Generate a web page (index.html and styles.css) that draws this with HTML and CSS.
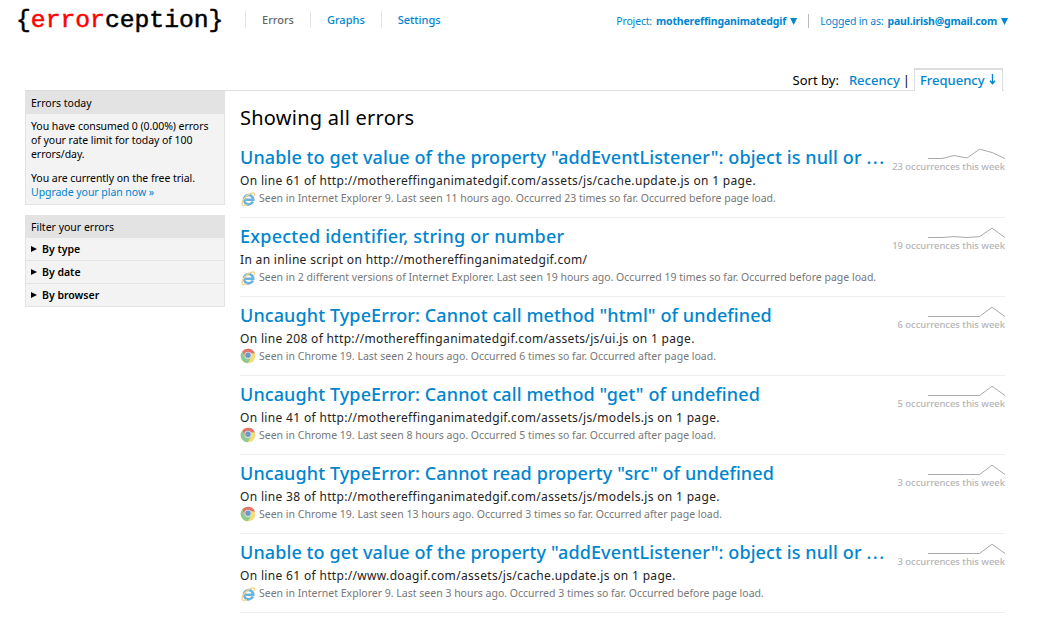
FILE: index.html
```html
<!DOCTYPE html>
<html lang="en">
<head>
<meta charset="utf-8">
<title>Errorception</title>
<link rel="stylesheet" href="styles.css">
</head>
<body>
<svg class="defs" width="0" height="0" aria-hidden="true">
  <symbol id="ie" viewBox="0 0 16 16">
    <path d="M12.9 10.6A4.7 4.7 0 1 1 13.300 8.700H5.400" fill="none" stroke="#6bb2de" stroke-width="2.600"/>
    <path d="M2.6 14.2C.4 11.800 5.500 4.200 10.800 2.300c3.200-1 4.200.3 3.500 2.700" fill="none" stroke="#f3d489" stroke-width="1.400"/>
    <path d="M2.600 14.200c1 .8 2.600.3 4-.6" fill="none" stroke="#f3d489" stroke-width="1.200"/>
  </symbol>
  <symbol id="chrome" viewBox="0 0 16 16">
    <circle cx="8" cy="8" r="7.3" fill="#f5dc77"/>
    <path d="M2.300 3.500A7.300 7.300 0 0 1 14.900 5.600L8 5 5 9.800Z" fill="#e2726b"/>
    <path d="M2.300 3.500A7.300 7.300 0 0 0 7.800 15.300L10.800 10 5 9.800Z" fill="#8fcb8f"/>
    <circle cx="8" cy="7.300" r="3.600" fill="#dfe6ee"/>
    <circle cx="8" cy="7.300" r="2.700" fill="#6f98c6"/>
  </symbol>
</svg>
<header class="top">
  <a class="logo"><span class="red">error</span></a>
  <nav class="nav"><a class="current">Errors</a><a>Graphs</a><a>Settings</a></nav>
  <div class="account"><a class="project">Project: <b>mothereffinganimatedgif</b> <i class="down"></i></a><a class="user">Logged in as: <b>paul.irish@gmail.com</b> <i class="down"></i></a></div>
</header>
<div class="sort"><span class="label">Sort by:</span><a class="recency">Recency</a><span class="bar">|</span><a class="tab">Frequency <svg width="7" height="11" viewBox="0 0 7 11"><path d="M3.5 0v9.5M1 6.8l2.5 2.8L6 6.8" fill="none" stroke="#0085cf" stroke-width="1.4"/></svg></a></div>
<div class="page">
  <aside class="side">
    <section class="box">
      <h3>Errors today</h3>
      <div class="quota"><p>You have consumed 0 (0.00%) errors<br>of your rate limit for today of 100<br>errors/day.</p><p>You are currently on the free trial.<br><a>Upgrade your plan now »</a></p></div>
    </section>
    <section class="box filters">
      <h3>Filter your errors</h3>
      <div class="filter"><i class="right"></i>By type</div>
      <div class="filter"><i class="right"></i>By date</div>
      <div class="filter"><i class="right"></i>By browser</div>
    </section>
  </aside>
  <main class="main">
    <h1>Showing all errors</h1>
    <article class="error">
      <div class="info"><h2>Unable to get value of the property "addEventListener": object is null or <span class="dots">...</span></h2>
      <p class="where">On line 61 of http://mothereffinganimatedgif.com/assets/js/cache.update.js on 1 page.</p>
      <p class="seen"><svg class="ie"><use href="#ie"/></svg>Seen in Internet Explorer 9. Last seen 11 hours ago. Occurred 23 times so far. Occurred before page load.</p></div>
      <div class="week"><svg class="spark" viewBox="0 0 78 12"><path d="M0 10.5H14L26 7.5 39 10 51.500 1.200 64 4.500 77 10.500"/></svg><span>23 occurrences this week</span></div>
    </article>
    <article class="error">
      <div class="info"><h2 class="loose">Expected identifier, string or number</h2>
      <p class="where">In an inline script on http://mothereffinganimatedgif.com/</p>
      <p class="seen"><svg class="ie"><use href="#ie"/></svg>Seen in 2 different versions of Internet Explorer. Last seen 19 hours ago. Occurred 19 times so far. Occurred before page load.</p></div>
      <div class="week"><svg class="spark" viewBox="0 0 78 12"><path d="M0 10.5H14L26 9.600 39 10.500 51.500 9.600 64 1.200 77 10.500"/></svg><span>19 occurrences this week</span></div>
    </article>
    <article class="error">
      <div class="info"><h2>Uncaught TypeError: Cannot call method "html" of undefined</h2>
      <p class="where">On line 208 of http://mothereffinganimatedgif.com/assets/js/ui.js on 1 page.</p>
      <p class="seen"><svg class="chrome"><use href="#chrome"/></svg>Seen in Chrome 19. Last seen 2 hours ago. Occurred 6 times so far. Occurred after page load.</p></div>
      <div class="week"><svg class="spark" viewBox="0 0 78 12"><path d="M0 10.5H51.500L64 1.200 77 10.500"/></svg><span>6 occurrences this week</span></div>
    </article>
    <article class="error">
      <div class="info"><h2>Uncaught TypeError: Cannot call method "get" of undefined</h2>
      <p class="where">On line 41 of http://mothereffinganimatedgif.com/assets/js/models.js on 1 page.</p>
      <p class="seen"><svg class="chrome"><use href="#chrome"/></svg>Seen in Chrome 19. Last seen 8 hours ago. Occurred 5 times so far. Occurred after page load.</p></div>
      <div class="week"><svg class="spark" viewBox="0 0 78 12"><path d="M0 10.5H51.500L64 1.200 77 10.500"/></svg><span>5 occurrences this week</span></div>
    </article>
    <article class="error">
      <div class="info"><h2>Uncaught TypeError: Cannot read property "src" of undefined</h2>
      <p class="where">On line 38 of http://mothereffinganimatedgif.com/assets/js/models.js on 1 page.</p>
      <p class="seen"><svg class="chrome"><use href="#chrome"/></svg>Seen in Chrome 19. Last seen 13 hours ago. Occurred 3 times so far. Occurred after page load.</p></div>
      <div class="week"><svg class="spark" viewBox="0 0 78 12"><path d="M0 10.5H51.500L64 1.200 77 10.500"/></svg><span>3 occurrences this week</span></div>
    </article>
    <article class="error">
      <div class="info"><h2>Unable to get value of the property "addEventListener": object is null or <span class="dots">...</span></h2>
      <p class="where">On line 61 of http://www.doagif.com/assets/js/cache.update.js on 1 page.</p>
      <p class="seen"><svg class="ie"><use href="#ie"/></svg>Seen in Internet Explorer 9. Last seen 3 hours ago. Occurred 3 times so far. Occurred before page load.</p></div>
      <div class="week"><svg class="spark" viewBox="0 0 78 12"><path d="M0 10.5H51.500L64 1.200 77 10.500"/></svg><span>3 occurrences this week</span></div>
    </article>
  </main>
</div>
</body>
</html>
```
FILE: styles.css
```css
* { box-sizing: border-box; margin: 0; padding: 0; }
body { width: 1043px; height: 622px; overflow: hidden; background: #fff; color: #000; font: 11px/14px "Noto Sans", sans-serif; white-space: nowrap; }
.defs { display: block; height: 0; }
a { color: #0085cf; }
svg { flex: none; }
.top { display: flex; height: 40px; align-items: flex-start; }
.logo { width: 245px; padding: 5px 0 0 16px; font: 24.700px/30px "Liberation Mono", monospace; color: #000; -webkit-text-stroke: .5px; }
.logo::before { content: "{"; }
.logo::after { content: "ception}"; }
.red { color: #f00; }
.nav { display: flex; padding-top: 11px; font-weight: 500; }
.nav a { height: 17px; padding: 2px 16px 0; border-left: 1px solid #e5e5e5; }
.nav .current { color: #666; }
.account { display: flex; margin-left: auto; padding: 14px 35px 0 0; }
.account a { display: flex; gap: 4px; font-size: 10.500px; letter-spacing: -.17px; }
.project { padding-right: 11px; margin-right: 11px; border-right: 1px solid #bbb; }
.down { width: 7px; height: 7px; margin-top: 4px; background: #0085cf; clip-path: polygon(0 0, 100% 0, 50% 100%); }
.sort { display: flex; justify-content: flex-end; height: 51px; margin: 0 39px 0 25px; padding-top: 28px; border-bottom: 1px solid #ddd; font-size: 13px; line-height: 24px; }
.label { margin-right: 10px; }
.recency, .tab { font-weight: 500; }
.bar { margin: 0 4px 0 3px; }
.tab { height: 23px; padding: 0 6px 0 5px; border: 1px solid #ddd; border-top-width: 2px; border-bottom: 0; background: #fff; line-height: 21px; margin-right: 1px; }
.tab svg { margin-left: 1px; }
.page { display: flex; gap: 15px; padding-left: 25px; }
.side { width: 200px; }
.box { margin-bottom: 10px; border: 1px solid #e3e3e3; border-top: 0; background: #f3f3f3; font-size: 10.500px; }
.box h3 { height: 23px; padding: 5px 5px 0; background: #e3e3e3; font-size: 10.500px; font-weight: 400; }
.filters h3 { height: 22px; }
.quota { height: 90px; padding: 5px; letter-spacing: -.05px; }
.quota p { margin-bottom: 10px; }
.filter { display: flex; align-items: center; height: 23px; padding-left: 5px; border-top: 1px solid #e3e3e3; font-weight: 600; }
.right { width: 6px; height: 6px; margin-right: 5px; background: #000; clip-path: polygon(0 0, 100% 50%, 0 100%); }
.main { width: 765px; }
.main h1 { height: 48px; padding-top: 12px; font-size: 20px; line-height: 30px; font-weight: 400; letter-spacing: .25px; }
.error { display: flex; justify-content: space-between; height: 79px; border-bottom: 1px solid #eee; }
.info { width: 645px; }
.error h2 { height: 33px; padding-top: 5px; font-size: 18px; line-height: 26px; font-weight: 500; letter-spacing: .1px; color: #0085cf; }
.error .loose { letter-spacing: .23px; }
.dots { letter-spacing: 1.500px; }
.where { height: 18px; font-size: 12px; line-height: 18px; letter-spacing: .33px; color: #222; }
.seen { display: flex; height: 18px; font-size: 10.500px; line-height: 17px; color: #777; }
.ie, .chrome { width: 16px; height: 16px; margin-right: 3px; }
.ie { margin-top: 1px; }
.week { display: flex; flex-direction: column; align-items: flex-end; padding-top: 9px; font-size: 9.500px; font-weight: 500; letter-spacing: -.05px; color: #b5b5b5; }
.spark { width: 78px; height: 12px; margin-right: -1px; fill: none; stroke: #aaa; stroke-width: 1; }
.week span { line-height: 14px; }
```
